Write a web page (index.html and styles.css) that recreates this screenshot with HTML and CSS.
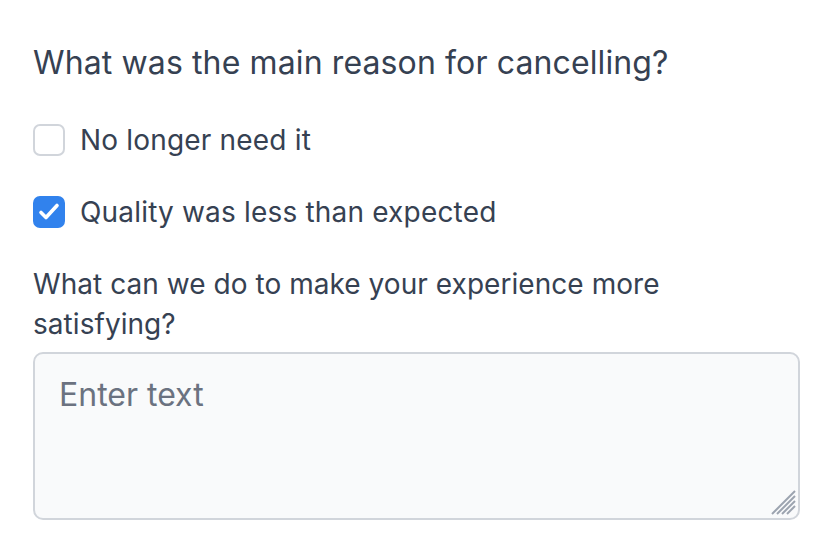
FILE: index.html
```html
<!DOCTYPE html>
<html>
<head>
  <title>Cancellation survey</title>
  <link rel="stylesheet" href="styles.css">
</head>
<body>
  <form class="survey">
    <h2 class="question">What was the main reason for cancelling?</h2>
    <label class="option">
      <span class="box"></span>
      No longer need it
    </label>
    <label class="option">
      <span class="box checked">
        <svg viewBox="0 0 32 32" width="32" height="32"><path d="M8 16.5l5 5 11-12" fill="none" stroke="#fff" stroke-width="3.6" stroke-linecap="round" stroke-linejoin="round"/></svg>
      </span>
      Quality was less than expected
    </label>
    <p class="prompt">What can we do to make your experience more satisfying?</p>
    <div class="answerWrap">
      <textarea class="answer" placeholder="Enter text"></textarea>
      <svg class="grip" viewBox="0 0 26 26" width="26" height="26">
        <g stroke="#9ca3af" stroke-width="2">
          <line x1="24" y1="1" x2="1" y2="24"/>
          <line x1="24" y1="6" x2="6" y2="24"/>
          <line x1="24" y1="11" x2="11" y2="24"/>
          <line x1="24" y1="16" x2="16" y2="24"/>
        </g>
      </svg>
    </div>
  </form>
</body>
</html>
```

FILE: styles.css
```css
body { margin: 0; font-family: Inter, "Noto Sans", sans-serif; color: #364152; }
.survey { padding: 39px 33px 0 33px; display: flex; flex-direction: column; align-items: flex-start; }
.question { font-size: 32px; font-weight: 400; line-height: 48px; margin: 0 0 33px; letter-spacing: 0.12px; }
.option { display: flex; align-items: center; gap: 15px; font-size: 28px; line-height: 40px; margin-bottom: 32px; letter-spacing: 0.18px; }
.box { width: 32px; height: 32px; box-sizing: border-box; border: 2px solid #d1d5db; border-radius: 7px; background: #fff; display: flex; align-items: center; justify-content: center; flex: none; overflow: hidden; }
.box.checked { background: #3182ed; border-color: #3182ed; }
.box svg { flex: none; }
.prompt { font-size: 28px; line-height: 40px; margin: 0 0 8px; max-width: 680px; letter-spacing: 0.05px; }
.answerWrap { position: relative; width: 767px; height: 168px; }
.answer { display: block; width: 100%; height: 100%; box-sizing: border-box; border: 2px solid #d1d5db; border-radius: 10px; background: #f9fafb; padding: 21px 24px; margin: 0; font-family: inherit; font-size: 32px; color: #374151; resize: none; outline: none; }
.answer::placeholder { color: #6b7280; }
.grip { position: absolute; right: 3px; bottom: 4px; pointer-events: none; }
```
